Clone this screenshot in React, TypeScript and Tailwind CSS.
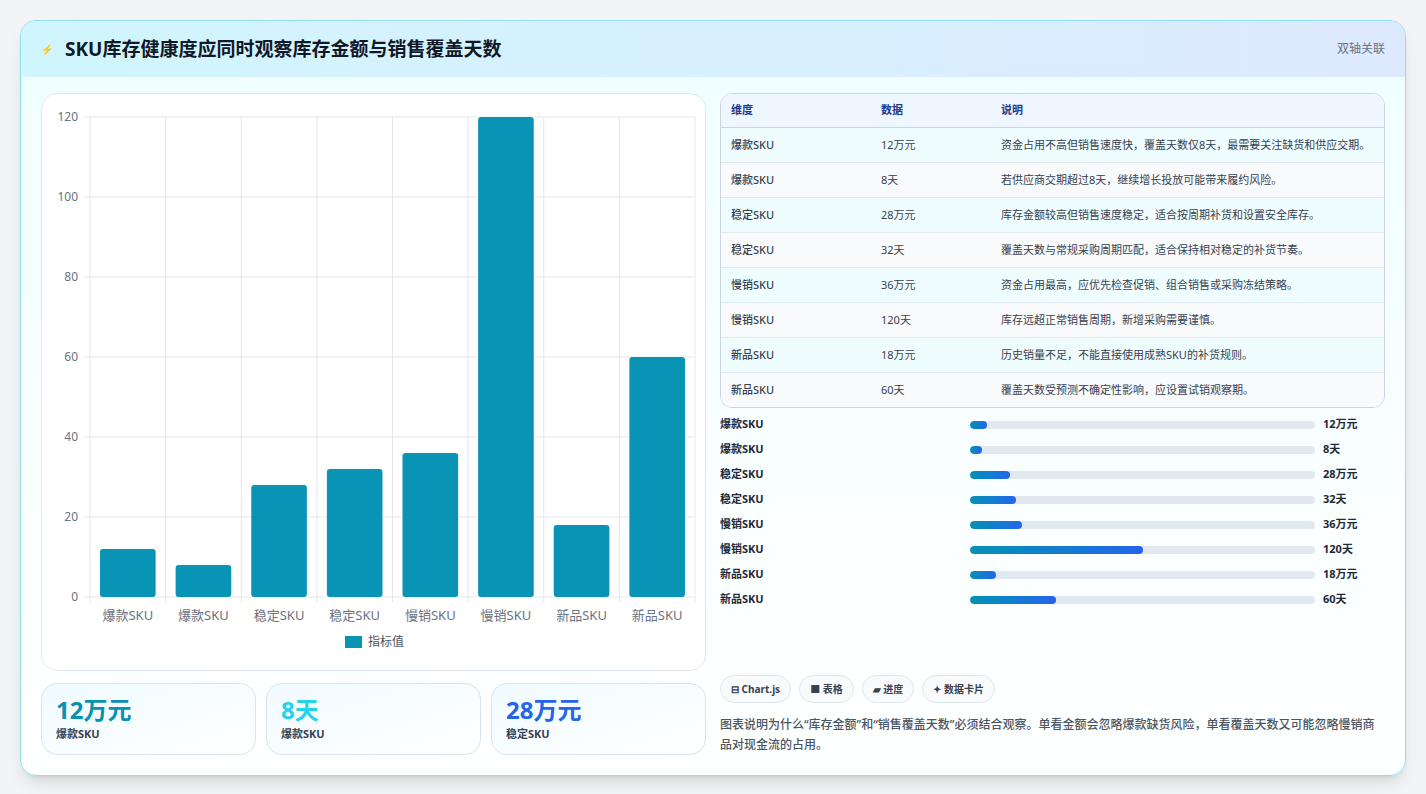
import React from "react";

const font = { fontFamily: '"Noto Sans", "Noto Sans CJK SC", sans-serif' };

const rows = [
  { dim: "爆款SKU", val: "12万元", note: "资金占用不高但销售速度快，覆盖天数仅8天，最需要关注缺货和供应交期。", n: 12 },
  { dim: "爆款SKU", val: "8天", note: "若供应商交期超过8天，继续增长投放可能带来履约风险。", n: 8 },
  { dim: "稳定SKU", val: "28万元", note: "库存金额较高但销售速度稳定，适合按周期补货和设置安全库存。", n: 28 },
  { dim: "稳定SKU", val: "32天", note: "覆盖天数与常规采购周期匹配，适合保持相对稳定的补货节奏。", n: 32 },
  { dim: "慢销SKU", val: "36万元", note: "资金占用最高，应优先检查促销、组合销售或采购冻结策略。", n: 36 },
  { dim: "慢销SKU", val: "120天", note: "库存远超正常销售周期，新增采购需要谨慎。", n: 120 },
  { dim: "新品SKU", val: "18万元", note: "历史销量不足，不能直接使用成熟SKU的补货规则。", n: 18 },
  { dim: "新品SKU", val: "60天", note: "覆盖天数受预测不确定性影响，应设置试销观察期。", n: 60 },
];

function Chart() {
  const W = 664, H = 576;
  const x0 = 48, x1 = 653, y0 = 23, y1 = 503;
  const cw = (x1 - x0) / 8;
  const ticks = [0, 20, 40, 60, 80, 100, 120];
  return (
    <svg width={W} height={H} className="block">
      {ticks.map((t) => {
        const y = y1 - (t / 120) * (y1 - y0);
        return (
          <g key={t}>
            <line x1={x0 - 6} x2={x1} y1={y} y2={y} stroke="#e5e7eb" />
            <text x={x0 - 12} y={y + 4} textAnchor="end" fontSize="12" fill="#6b7280" style={font}>{t}</text>
          </g>
        );
      })}
      {Array.from({ length: 9 }).map((_, i) => (
        <line key={i} x1={x0 + i * cw} x2={x0 + i * cw} y1={y0} y2={y1 + 6} stroke="#e5e7eb" />
      ))}
      {rows.map((r, i) => {
        const h = (r.n / 120) * (y1 - y0);
        return (
          <g key={i}>
            <rect x={x0 + i * cw + 10} y={y1 - h} width={cw - 20} height={h} rx="3" fill="#0993b4" />
            <text x={x0 + i * cw + cw / 2} y={y1 + 23} textAnchor="middle" fontSize="13" fill="#6b7280" style={font}>{r.dim}</text>
          </g>
        );
      })}
      <rect x={303} y={542} width={17} height={12} fill="#0993b4" />
      <text x={326} y={552} fontSize="12" fill="#4b5563" style={font}>指标值</text>
    </svg>
  );
}

export default function App() {
  return (
    <div className="min-h-screen bg-[#f3f4f6] p-5" style={font}>
      <div className="rounded-2xl border border-[#8ee0ef] bg-gradient-to-b from-[#f0feff] to-white overflow-hidden shadow-lg">
        <div className="h-14 flex items-center justify-between px-5 bg-gradient-to-r from-[#d0f6fd] to-[#dde9fe]">
          <div className="flex items-center gap-3">
            <span className="text-[10px] text-blue-600">⚡</span>
            <h1 className="text-[19px] font-bold text-[#111827]">SKU库存健康度应同时观察库存金额与销售覆盖天数</h1>
          </div>
          <span className="text-xs text-gray-500">双轴关联</span>
        </div>
        <div className="grid grid-cols-2 gap-[14px] p-5 pt-4">
          <div className="flex flex-col gap-3">
            <div className="rounded-2xl border border-[#e2e8f0] bg-white h-[578px] overflow-hidden">
              <Chart />
            </div>
            <div className="grid grid-cols-3 gap-2.5">
              {[
                ["12万元", "text-[#0891b2]"],
                ["8天", "text-[#22d3ee]"],
                ["28万元", "text-[#2563eb]"],
              ].map(([v, c], i) => (
                <div key={i} className="h-[72px] rounded-2xl border border-[#dbe3ef] bg-gradient-to-br from-[#f0fbff] to-white px-3.5 pt-2.5">
                  <div className={`text-[24px] font-bold leading-8 ${c}`}>{v}</div>
                  <div className="text-[11px] font-bold text-gray-700">{rows[i].dim}</div>
                </div>
              ))}
            </div>
          </div>
          <div className="flex flex-col">
            <div className="rounded-xl border border-[#cbd5e1] overflow-hidden bg-white">
              <table className="w-full text-[11px] text-[#374151]">
                <thead>
                  <tr className="bg-[#eef6ff] text-[#1e3a8a] border-b border-[#cbd5e1] h-[33px]">
                    <th className="text-left font-bold pl-2.5 w-[160px]">维度</th>
                    <th className="text-left font-bold w-[120px]">数据</th>
                    <th className="text-left font-bold">说明</th>
                  </tr>
                </thead>
                <tbody>
                  {rows.map((r, i) => (
                    <tr key={i} className={`border-b border-[#e2e8f0] last:border-0 ${i % 2 ? "bg-[#f8fafc]" : "bg-[#f0fdff]"}`}>
                      <td className="pl-2.5 py-2 align-top leading-[18px] font-medium">{r.dim}</td>
                      <td className="py-2 align-top leading-[18px]">{r.val}</td>
                      <td className="py-2 pr-3 align-top leading-[18px]">{r.note}</td>
                    </tr>
                  ))}
                </tbody>
              </table>
            </div>
            <div className="mt-2 flex flex-col gap-[7px]">
              {rows.map((r, i) => (
                <div key={i} className="flex items-center h-[18px] text-[11px] font-bold text-[#1f2937]">
                  <span className="w-[250px]">{r.dim}</span>
                  <div className="w-[345px] h-2 rounded-full bg-[#e2e8f0] overflow-hidden">
                    <div className="h-full rounded-full bg-gradient-to-r from-[#0891b2] to-[#2563eb]" style={{ width: `${(r.n / 240) * 100}%` }} />
                  </div>
                  <span className="ml-2">{r.val}</span>
                </div>
              ))}
            </div>
            <div className="mt-auto">
              <div className="flex gap-2">
                {["⊟ Chart.js", "■ 表格", "▰ 进度", "✦ 数据卡片"].map((c) => (
                  <span key={c} className="h-7 flex items-center px-2.5 rounded-full border border-[#e2e8f0] bg-[#f8fafc] text-[10px] font-bold text-[#374151]">{c}</span>
                ))}
              </div>
              <p className="mt-3 text-[12px] leading-[20px] text-[#4b5563] font-medium">
                图表说明为什么“库存金额”和“销售覆盖天数”必须结合观察。单看金额会忽略爆款缺货风险，单看覆盖天数又可能忽略慢销商品对现金流的占用。
              </p>
            </div>
          </div>
        </div>
      </div>
    </div>
  );
}
